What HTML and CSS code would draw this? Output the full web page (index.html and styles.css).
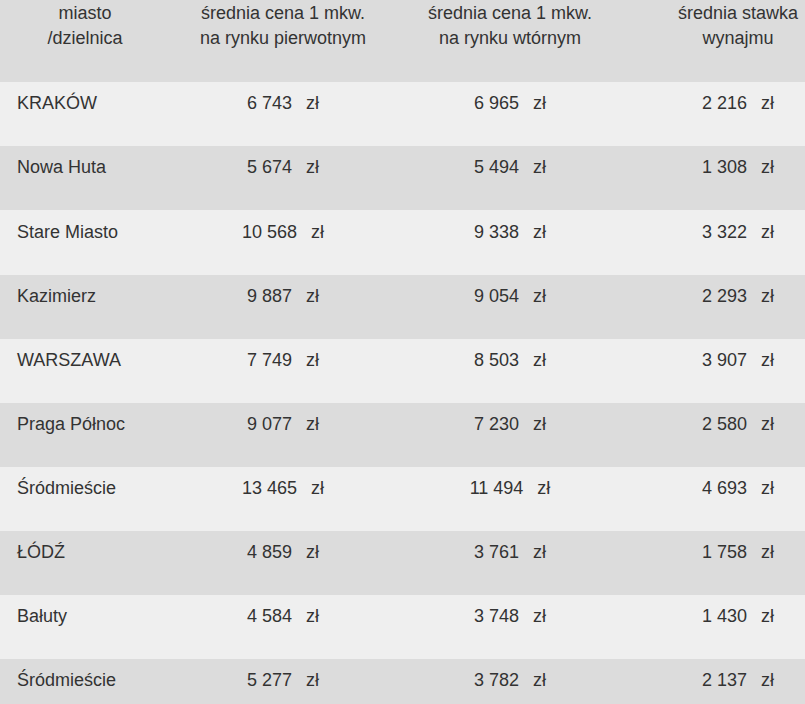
FILE: index.html
```html
<!DOCTYPE html>
<html lang="pl">
<head>
<meta charset="utf-8">
<title>Ceny mieszkań</title>
<link rel="stylesheet" href="styles.css">
</head>
<body>
<table class="prices">
  <colgroup>
    <col class="c1"><col class="c2"><col class="c3"><col class="c4">
  </colgroup>
  <thead>
    <tr>
      <th>miasto<br>/dzielnica</th>
      <th>średnia cena 1 mkw.<br>na rynku pierwotnym</th>
      <th>średnia cena 1 mkw.<br>na rynku wtórnym</th>
      <th>średnia stawka<br>wynajmu</th>
    </tr>
  </thead>
  <tbody>
    <tr><td>KRAKÓW</td><td>6 743<span class="cur">zł</span></td><td>6 965<span class="cur">zł</span></td><td>2 216<span class="cur">zł</span></td></tr>
    <tr><td>Nowa Huta</td><td>5 674<span class="cur">zł</span></td><td>5 494<span class="cur">zł</span></td><td>1 308<span class="cur">zł</span></td></tr>
    <tr class="tall"><td>Stare Miasto</td><td>10 568<span class="cur">zł</span></td><td>9 338<span class="cur">zł</span></td><td>3 322<span class="cur">zł</span></td></tr>
    <tr><td>Kazimierz</td><td>9 887<span class="cur">zł</span></td><td>9 054<span class="cur">zł</span></td><td>2 293<span class="cur">zł</span></td></tr>
    <tr><td>WARSZAWA</td><td>7 749<span class="cur">zł</span></td><td>8 503<span class="cur">zł</span></td><td>3 907<span class="cur">zł</span></td></tr>
    <tr><td>Praga Północ</td><td>9 077<span class="cur">zł</span></td><td>7 230<span class="cur">zł</span></td><td>2 580<span class="cur">zł</span></td></tr>
    <tr><td>Śródmieście</td><td>13 465<span class="cur">zł</span></td><td>11 494<span class="cur">zł</span></td><td>4 693<span class="cur">zł</span></td></tr>
    <tr><td>ŁÓDŹ</td><td>4 859<span class="cur">zł</span></td><td>3 761<span class="cur">zł</span></td><td>1 758<span class="cur">zł</span></td></tr>
    <tr><td>Bałuty</td><td>4 584<span class="cur">zł</span></td><td>3 748<span class="cur">zł</span></td><td>1 430<span class="cur">zł</span></td></tr>
    <tr><td>Śródmieście</td><td>5 277<span class="cur">zł</span></td><td>3 782<span class="cur">zł</span></td><td>2 137<span class="cur">zł</span></td></tr>
  </tbody>
</table>
</body>
</html>
```
FILE: styles.css
```css
html, body {
  margin: 0;
  padding: 0;
  background: #efefef;
  overflow: hidden;
}
body {
  font-family: "Liberation Sans", Arial, sans-serif;
  font-size: 18px;
  color: #333333;
}
.prices {
  border-collapse: collapse;
  table-layout: fixed;
  width: 852px;
}
.c1 { width: 170px; }
.c2 { width: 226px; }
.c3 { width: 228px; }
.c4 { width: 228px; }
.prices th {
  font-weight: normal;
  text-align: center;
  vertical-align: top;
  line-height: 25px;
  height: 82px;
  box-sizing: border-box;
  padding: 1px 0 31px;
  background: #dcdcdc;
}
.prices td {
  text-align: center;
  vertical-align: top;
  line-height: 25px;
  height: 64px;
  box-sizing: border-box;
  padding: 9px 0 0;
  white-space: nowrap;
}
.prices tr.tall td {
  height: 65px;
  padding-top: 10px;
}
.prices td:first-child {
  text-align: left;
  padding-left: 17px;
}
.prices tbody tr:nth-child(odd) { background: #efefef; }
.prices tbody tr:nth-child(even) { background: #dcdcdc; }
.cur {
  margin-left: 14px;
}
```
